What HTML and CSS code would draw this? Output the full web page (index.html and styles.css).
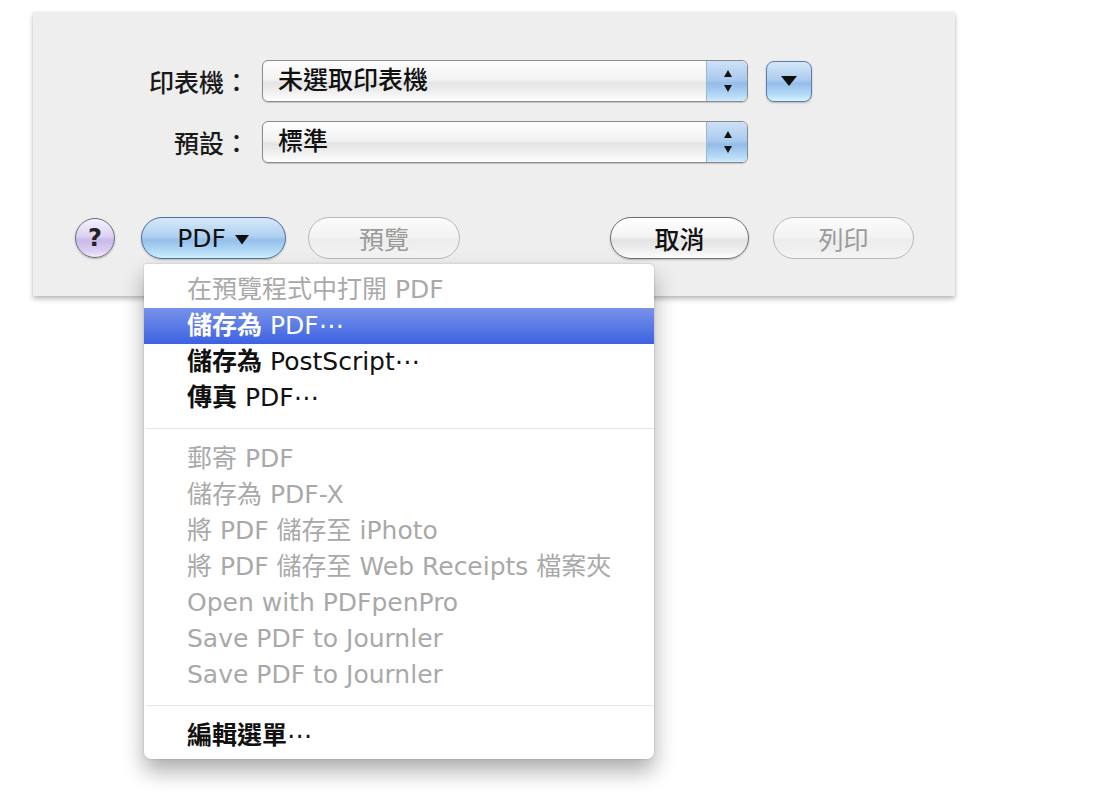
FILE: index.html
```html
<!DOCTYPE html>
<html lang="zh-Hant">
<head>
<meta charset="utf-8">
<title>列印</title>
<link rel="stylesheet" href="styles.css">
</head>
<body>
<div class="page">
<div class="panel">
  <div class="form">
    <div class="label"><span class="zh">印表機：</span></div>
    <div class="popup">
      <span class="popup-text zh">未選取印表機</span>
      <span class="stepper"><svg width="12" height="42" viewBox="0 0 12 42"><path d="M6 10 L10 17 H2 Z M2 25 H10 L6 32 Z" fill="#141414"/></svg></span>
    </div>
    <div class="minibtn"><svg width="18" height="12" viewBox="0 0 18 12"><path d="M1 1 H17 L9 11 Z" fill="#111"/></svg></div>
    <div class="label"><span class="zh">預設：</span></div>
    <div class="popup">
      <span class="popup-text zh">標準</span>
      <span class="stepper"><svg width="12" height="42" viewBox="0 0 12 42"><path d="M6 10 L10 17 H2 Z M2 25 H10 L6 32 Z" fill="#141414"/></svg></span>
    </div>
  </div>
  <div class="actions">
    <div class="help">?</div>
    <div class="pdfwrap">
      <div class="btn blue pdfbtn">PDF <svg width="16" height="11" viewBox="0 0 16 11"><path d="M1 1 H15 L8 10.5 Z" fill="#111"/></svg></div>
      <div class="menu">
        <div class="item off">在預覽程式中打開 PDF</div>
        <div class="item sel"><span class="zh b">儲存為</span> PDF⋯</div>
        <div class="item"><span class="zh b">儲存為</span> PostScript⋯</div>
        <div class="item"><span class="zh b">傳真</span> PDF⋯</div>
        <div class="sep"></div>
        <div class="item off">郵寄 PDF</div>
        <div class="item off">儲存為 PDF-X</div>
        <div class="item off">將 PDF 儲存至 iPhoto</div>
        <div class="item off">將 PDF 儲存至 Web Receipts 檔案夾</div>
        <div class="item off">Open with PDFpenPro</div>
        <div class="item off">Save PDF to Journler</div>
        <div class="item off">Save PDF to Journler</div>
        <div class="sep"></div>
        <div class="item"><span class="zh b">編輯選單</span>⋯</div>
      </div>
    </div>
    <div class="btn disabled preview">預覽</div>
    <div class="spacer"></div>
    <div class="btn cancel">取消</div>
    <div class="btn disabled print">列印</div>
  </div>
</div>
</div>
</body>
</html>
```

FILE: styles.css
```css
html, body {
  margin: 0;
  background: #ffffff;
}

body {
  font-family: "DejaVu Sans", "Noto Sans CJK TC", sans-serif;
  font-size: 25px;
  color: #151515;
}

.page {
  box-sizing: border-box;
  min-height: 806px;
  padding: 12px 0 0 33px;
}

.zh {
  font-weight: 500;
}

.zh.b {
  font-weight: 700;
}

.panel {
  position: relative;
  box-sizing: border-box;
  width: 922px;
  height: 284px;
  padding-top: 48px;
  background: #eeeeee;
  box-shadow: 0 3px 5px rgba(0, 0, 0, 0.26), 0 0 2px rgba(0, 0, 0, 0.08);
}

/* ---------- form rows ---------- */
.form {
  display: grid;
  grid-template-columns: 229px 486px 64px;
  grid-auto-rows: 42px;
  row-gap: 19px;
  align-items: center;
}

.label {
  text-align: right;
  padding-right: 13px;
  color: #1a1a1a;
}

.popup {
  box-sizing: border-box;
  height: 42px;
  display: flex;
  align-items: stretch;
  border: 1.5px solid #8b8b8b;
  border-radius: 6px;
  overflow: hidden;
  background: linear-gradient(#fdfdfd 0%, #f3f3f3 45%, #e4e4e4 55%, #f4f4f4 85%, #ffffff 100%);
  box-shadow: 0 1px 1px rgba(0, 0, 0, 0.18);
}

.popup-text {
  flex: 1;
  padding-left: 15px;
  line-height: 40px;
  color: #111;
}

.stepper {
  width: 42px;
  display: flex;
  justify-content: center;
  align-items: flex-start;
  margin: -1.5px -1.5px -1.5px 0;
  background: linear-gradient(#cfe2f6 0%, #aacbee 45%, #94bce9 55%, #b9dcf6 85%, #dcf3fd 100%);
  border-left: 1px solid #9fb6d2;
}

.stepper svg {
  display: block;
}

.minibtn {
  justify-self: end;
  box-sizing: border-box;
  width: 46px;
  height: 41px;
  border: 1.5px solid #5d7ba6;
  border-radius: 8px;
  display: flex;
  align-items: center;
  justify-content: center;
  background: linear-gradient(#d5e7f9 0%, #abcdef 45%, #95bdea 55%, #b7dcf7 85%, #d9f3fd 100%);
  box-shadow: 0 1px 2px rgba(0, 0, 0, 0.25);
}

/* ---------- action buttons ---------- */
.actions {
  display: flex;
  align-items: center;
  margin-top: 54px;
  padding: 0 41px 0 42px;
  height: 42px;
}

.help {
  box-sizing: border-box;
  width: 40px;
  height: 40px;
  margin-right: 26px;
  border-radius: 50%;
  border: 1.5px solid #6e6a7e;
  display: flex;
  align-items: center;
  justify-content: center;
  font-weight: 700;
  font-size: 24px;
  color: #222;
  background: linear-gradient(#f6f2fc 0%, #ddd2f2 45%, #c8b9e8 55%, #dccff3 85%, #f2ecfc 100%);
  box-shadow: 0 1px 2px rgba(0, 0, 0, 0.25);
}

.btn {
  box-sizing: border-box;
  height: 42px;
  border-radius: 21px;
  border: 1.5px solid #6f6f6f;
  display: flex;
  align-items: center;
  justify-content: center;
  background: linear-gradient(#ffffff 0%, #f4f4f4 45%, #e3e3e3 55%, #f2f2f2 85%, #ffffff 100%);
  box-shadow: 0 1px 2px rgba(0, 0, 0, 0.22);
  color: #111;
}

.btn.blue {
  border-color: #4f6e9c;
  background: linear-gradient(#d6e8fa 0%, #b0d1f1 45%, #95bfeb 55%, #b5dcf7 85%, #d3f2fd 100%);
}

.btn.disabled {
  border-color: #b9b9b9;
  color: #9a9a9a;
  box-shadow: none;
  background: linear-gradient(#fbfbfb 0%, #f2f2f2 50%, #ececec 55%, #f4f4f4 100%);
}

.pdfwrap {
  position: relative;
  margin-right: 22px;
}

.pdfbtn {
  width: 145px;
  gap: 8px;
}

.pdfbtn svg {
  display: block;
  margin-top: 2px;
}

.preview {
  width: 152px;
}

.spacer {
  flex: 1;
}

.cancel {
  width: 139px;
  margin-right: 24px;
  font-weight: 500;
}

.print {
  width: 141px;
}

/* ---------- dropdown menu ---------- */
.menu {
  position: absolute;
  z-index: 5;
  top: 47px;
  left: 3px;
  width: 510px;
  box-sizing: border-box;
  padding: 8px 0 5px;
  background: #ffffff;
  border-radius: 2px 5px 7px 7px;
  box-shadow: 0 12px 22px rgba(0, 0, 0, 0.33), 0 0 2px rgba(0, 0, 0, 0.22);
}

.item {
  height: 36px;
  line-height: 36px;
  padding-left: 43px;
  white-space: nowrap;
  color: #111;
}

.item.off {
  color: #a9a9a9;
}

.item.sel {
  color: #ffffff;
  background: linear-gradient(#7892ea 0%, #5a7be6 50%, #3d60e2 100%);
}

.sep {
  height: 25px;
  display: flex;
  align-items: center;
}

.sep::after {
  content: "";
  flex: 1;
  height: 1px;
  margin-left: 2px;
  background: #e6e6e6;
}
```
